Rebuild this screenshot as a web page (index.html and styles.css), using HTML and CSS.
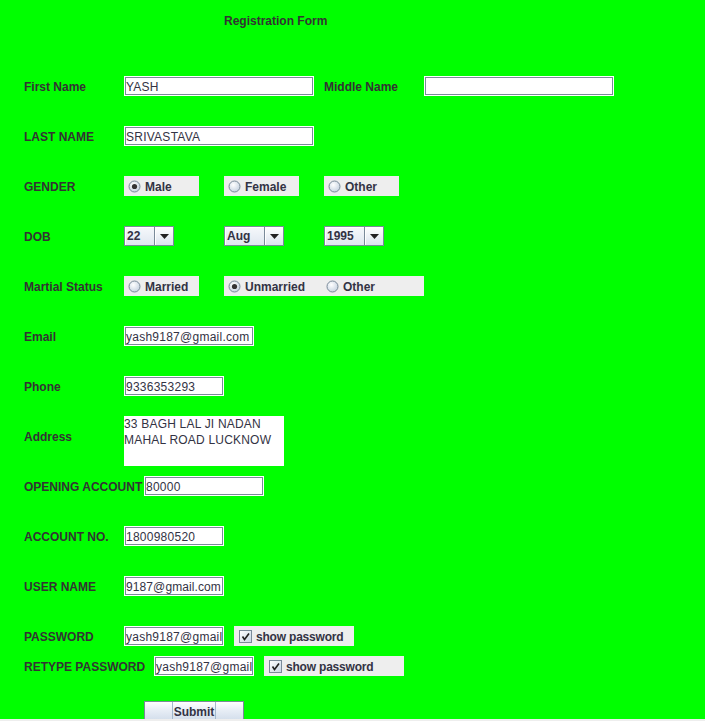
FILE: index.html
```html
<!DOCTYPE html>
<html>
<head>
<meta charset="utf-8">
<title>Registration Form</title>
<link rel="stylesheet" href="styles.css">
</head>
<body>
<svg width="0" height="0" class="defs">
  <defs>
    <radialGradient id="rg" cx="40%" cy="35%" r="70%">
      <stop offset="0" stop-color="#ffffff"/>
      <stop offset="1" stop-color="#c3d0df"/>
    </radialGradient>
    <linearGradient id="cg" x1="0" y1="0" x2="1" y2="1">
      <stop offset="0" stop-color="#ffffff"/>
      <stop offset="1" stop-color="#c8d5e4"/>
    </linearGradient>
  </defs>
</svg>
<div class="page">
  <div class="title">Registration Form</div>

  <div class="row first">
    <div class="label">First Name</div>
    <div class="field w190">YASH</div>
    <div class="label gapl">Middle Name</div>
    <div class="field w190"></div>
  </div>

  <div class="row">
    <div class="label">LAST NAME</div>
    <div class="field w190">SRIVASTAVA</div>
  </div>

  <div class="row">
    <div class="label">GENDER</div>
    <div class="panel w75"><svg class="radio" viewBox="0 0 13 13"><circle cx="6.5" cy="6.5" r="5.5" fill="url(#rg)" stroke="#7a8a99"/><circle cx="6.5" cy="6.5" r="2.6" fill="#333"/></svg>Male</div>
    <div class="panel w75 ml25"><svg class="radio" viewBox="0 0 13 13"><circle cx="6.5" cy="6.5" r="5.5" fill="url(#rg)" stroke="#7a8a99"/></svg>Female</div>
    <div class="panel w75 ml25"><svg class="radio" viewBox="0 0 13 13"><circle cx="6.5" cy="6.5" r="5.5" fill="url(#rg)" stroke="#7a8a99"/></svg>Other</div>
  </div>

  <div class="row">
    <div class="label">DOB</div>
    <div class="combo w50"><span class="cval">22</span><span class="cbtn"><svg width="9" height="5" viewBox="0 0 9 5"><path d="M0 0H9L4.5 5Z" fill="#222"/></svg></span></div>
    <div class="combo w60 ml50"><span class="cval">Aug</span><span class="cbtn"><svg width="9" height="5" viewBox="0 0 9 5"><path d="M0 0H9L4.5 5Z" fill="#222"/></svg></span></div>
    <div class="combo w60 ml40"><span class="cval">1995</span><span class="cbtn"><svg width="9" height="5" viewBox="0 0 9 5"><path d="M0 0H9L4.5 5Z" fill="#222"/></svg></span></div>
  </div>

  <div class="row">
    <div class="label">Martial Status</div>
    <div class="panel w75"><svg class="radio" viewBox="0 0 13 13"><circle cx="6.5" cy="6.5" r="5.5" fill="url(#rg)" stroke="#7a8a99"/></svg>Married</div>
    <div class="panel w200 ml25">
      <span class="opt"><svg class="radio" viewBox="0 0 13 13"><circle cx="6.5" cy="6.5" r="5.5" fill="url(#rg)" stroke="#7a8a99"/><circle cx="6.5" cy="6.5" r="2.6" fill="#333"/></svg>Unmarried</span>
      <span class="opt"><svg class="radio" viewBox="0 0 13 13"><circle cx="6.5" cy="6.5" r="5.5" fill="url(#rg)" stroke="#7a8a99"/></svg>Other</span>
    </div>
  </div>

  <div class="row">
    <div class="label">Email</div>
    <div class="field w130">yash9187@gmail.com</div>
  </div>

  <div class="row">
    <div class="label">Phone</div>
    <div class="field w100">9336353293</div>
  </div>

  <div class="row addr">
    <div class="label">Address</div>
    <div class="area">33 BAGH LAL JI NADAN<br>MAHAL ROAD LUCKNOW</div>
  </div>

  <div class="row after-addr">
    <div class="label w120">OPENING ACCOUNT</div>
    <div class="field w120">80000</div>
  </div>

  <div class="row">
    <div class="label">ACCOUNT NO.</div>
    <div class="field w100">1800980520</div>
  </div>

  <div class="row">
    <div class="label">USER NAME</div>
    <div class="field w100 tightfield">9187@gmail.com</div>
  </div>

  <div class="row">
    <div class="label">PASSWORD</div>
    <div class="field w100">yash9187@gmail</div>
    <div class="panel check w120 ml10"><svg class="cbox" viewBox="0 0 13 13"><rect x="0.5" y="0.5" width="12" height="12" fill="url(#cg)" stroke="#7a8a99"/><path d="M3.5 6.5L5.5 9.5L10 3.5" fill="none" stroke="#222" stroke-width="1.6"/></svg>show password</div>
  </div>

  <div class="row tight">
    <div class="label w130">RETYPE PASSWORD</div>
    <div class="field w100">yash9187@gmail</div>
    <div class="panel check w140 ml10"><svg class="cbox" viewBox="0 0 13 13"><rect x="0.5" y="0.5" width="12" height="12" fill="url(#cg)" stroke="#7a8a99"/><path d="M3.5 6.5L5.5 9.5L10 3.5" fill="none" stroke="#222" stroke-width="1.6"/></svg>show password</div>
  </div>

  <div class="submit-row">
    <button class="submit"><span class="focus">Submit</span></button>
  </div>
</div>
<div class="bottom-edge"></div>
</body>
</html>
```

FILE: styles.css
```css
html, body {
  margin: 0;
  padding: 0;
}
body {
  width: 705px;
  height: 721px;
  overflow: hidden;
  background: #eeeeee;
  font-family: "Liberation Sans", Arial, sans-serif;
  color: #333333;
}
.defs {
  position: absolute;
  width: 0;
  height: 0;
}
.page {
  height: 719px;
  background: #00ff00;
  overflow: hidden;
  display: flex;
  flex-direction: column;
  padding-left: 24px;
  box-sizing: border-box;
}
.title {
  margin-top: 11px;
  margin-left: 200px;
  height: 20px;
  line-height: 20px;
  font-size: 12px;
  font-weight: bold;
}
.row {
  display: flex;
  align-items: center;
  height: 20px;
  margin-top: 30px;
  flex-shrink: 0;
}
.row.first { margin-top: 45px; }
.row.addr {
  margin-top: 20px;
  height: 50px;
  align-items: flex-start;
}
.row.addr .label { margin-top: 9px; }
.row.after-addr { margin-top: 10px; }
.row.tight { margin-top: 10px; }

.label {
  width: 100px;
  flex-shrink: 0;
  font-size: 12px;
  font-weight: bold;
  line-height: 20px;
  padding-top: 2px;
  white-space: nowrap;
}
.label.w120 { width: 120px; }
.label.w130 { width: 130px; }
.gapl { margin-left: 10px; }

.field {
  box-sizing: border-box;
  height: 20px;
  border: 1px solid #ffffff;
  box-shadow: inset 0 0 0 1px #7a8a99;
  background: #ffffff;
  padding-left: 1px;
  padding-top: 2px;
  font-size: 12px;
  letter-spacing: 0.25px;
  line-height: 16px;
  color: #333344;
  white-space: nowrap;
  overflow: hidden;
  flex-shrink: 0;
}
.field.tightfield { letter-spacing: 0.1px; }
.w50 { width: 50px; }
.w60 { width: 60px; }
.w75 { width: 75px; }
.w100 { width: 100px; }
.w120 { width: 120px; }
.w130 { width: 130px; }
.w140 { width: 140px; }
.w190 { width: 190px; }
.w200 { width: 200px; }
.ml10 { margin-left: 10px; }
.ml25 { margin-left: 25px; }
.ml40 { margin-left: 40px; }
.ml50 { margin-left: 50px; }

.panel {
  box-sizing: border-box;
  height: 20px;
  background: #eeeeee;
  display: flex;
  align-items: center;
  padding-left: 4px;
  padding-top: 1px;
  font-size: 12px;
  font-weight: bold;
  color: #333344;
  white-space: nowrap;
  flex-shrink: 0;
}
.panel .opt {
  width: 100px;
  display: flex;
  align-items: center;
}
.radio {
  width: 13px;
  height: 13px;
  margin-right: 4px;
  flex-shrink: 0;
}
.panel.check { padding-left: 5px; letter-spacing: -0.2px; }
.cbox {
  width: 13px;
  height: 13px;
  margin-right: 4px;
  flex-shrink: 0;
}

.combo {
  box-sizing: border-box;
  height: 20px;
  border: 1px solid #7a8a99;
  display: flex;
  background: linear-gradient(#f6f8fb, #dfe7f0);
  flex-shrink: 0;
}
.cval {
  flex: 1;
  padding-left: 2px;
  padding-top: 1px;
  font-size: 12px;
  font-weight: bold;
  line-height: 17px;
  color: #333344;
  box-shadow: inset 1px 1px 0 #ffffff;
}
.cbtn {
  width: 18px;
  border-left: 1px solid #7a8a99;
  display: flex;
  align-items: center;
  justify-content: center;
  background: linear-gradient(#ffffff, #dbe4ee);
  box-shadow: inset 1px 1px 0 #ffffff;
}

.area {
  width: 160px;
  height: 50px;
  background: #ffffff;
  font-size: 12px;
  letter-spacing: 0.2px;
  line-height: 16px;
  color: #333344;
  white-space: nowrap;
  flex-shrink: 0;
}

.submit-row {
  margin-top: 25px;
  padding-left: 120px;
  flex-shrink: 0;
}
.submit {
  width: 100px;
  height: 22px;
  border: 1px solid #7a8a99;
  background: linear-gradient(#ffffff 0%, #e8eef6 40%, #cfdbe9 100%);
  padding: 0;
  margin: 0;
  display: flex;
  justify-content: center;
  align-items: stretch;
  font-family: "Liberation Sans", Arial, sans-serif;
  font-size: 12px;
  font-weight: bold;
  color: #333344;
}
.focus {
  padding: 0 1px;
  border-left: 1px solid #a3b8cc;
  border-right: 1px solid #a3b8cc;
  line-height: 20px;
}
.bottom-edge {
  height: 2px;
  background: #eeeeee;
}
```
